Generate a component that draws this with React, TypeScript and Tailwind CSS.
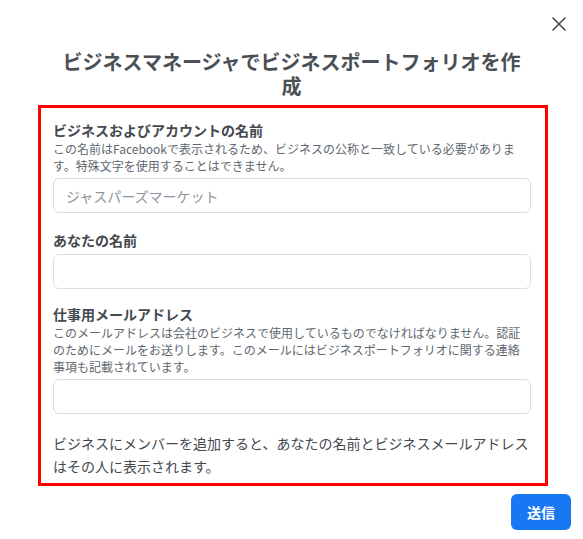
import { X } from 'lucide-react';

const font = { fontFamily: '"Noto Sans CJK JP", "Liberation Sans", sans-serif' };

function Field({ label, help, placeholder }: { label: string; help?: string; placeholder?: string }) {
  return (
    <div className="flex flex-col">
      <label className="text-[14px] leading-[20px] font-bold text-[#444950]">{label}</label>
      {help && <p className="text-[12px] leading-[17px] text-[#606770]">{help}</p>}
      <input
        type="text"
        placeholder={placeholder}
        className="mt-[4px] h-[35px] w-full rounded-md border border-[#dadde1] px-3 text-[14px] text-[#1c1e21] placeholder:text-[#8d949e] outline-none"
      />
    </div>
  );
}

export default function App() {
  return (
    <div className="w-[583px] h-[539px] bg-white relative" style={font}>
      {/* close */}
      <button className="absolute top-[12px] right-[12px] w-6 h-6 flex items-center justify-center text-[#444950]">
        <X size={24} strokeWidth={1.6} />
      </button>

      <h1 className="pt-[50px] mx-auto w-[472px] text-center text-[20px] leading-[24px] font-bold text-[#4b4f56]">
        ビジネスマネージャでビジネスポートフォリオを作成
      </h1>

      <div className="mt-[7px] ml-[38px] w-[510px] h-[381px] border-[3px] border-[#ff0000] pl-[12px] pr-[14px] pt-[12px]">
        <Field
          label="ビジネスおよびアカウントの名前"
          help="この名前はFacebookで表示されるため、ビジネスの公称と一致している必要があります。特殊文字を使用することはできません。"
          placeholder="ジャスパーズマーケット"
        />
        <div className="mt-[17px]">
          <Field label="あなたの名前" />
        </div>
        <div className="mt-[15px]">
          <Field
            label="仕事用メールアドレス"
            help="このメールアドレスは会社のビジネスで使用しているものでなければなりません。認証のためにメールをお送りします。このメールにはビジネスポートフォリオに関する連絡事項も記載されています。"
          />
        </div>
        <p className="mt-[18px] text-[14px] leading-[23px] text-[#444950]">
          ビジネスにメンバーを追加すると、あなたの名前とビジネスメールアドレスはその人に表示されます。
        </p>
      </div>

      <div className="flex justify-end pr-[12px] mt-[8px]">
        <button className="w-[60px] h-[36px] rounded-md bg-[#1877f2] text-white text-[14px] font-bold">送信</button>
      </div>
    </div>
  );
}
